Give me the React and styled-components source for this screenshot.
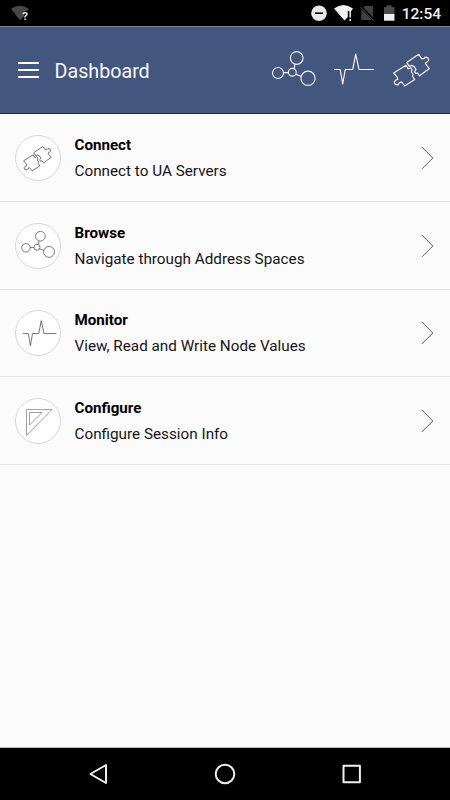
import styled, { createGlobalStyle } from 'styled-components';

const NodesIcon = ({ size, weight, color }) => (
  <Icon width={size} height={size} viewBox="0 0 48 48" $color={color} $weight={weight}>
    <circle cx="27.7" cy="12" r="6.3" />
    <circle cx="9" cy="27" r="5.5" />
    <circle cx="23.3" cy="26.3" r="3.9" />
    <circle cx="39" cy="32.3" r="7.1" />
    <path d="M14.5 26.6H19.4M25 22.8L26 18.2M26.8 28.2L32.2 30.4" />
  </Icon>
);

const PulseIcon = ({ size, weight, color }) => (
  <Icon width={size} height={size} viewBox="0 0 48 48" $color={color} $weight={weight}>
    <path d="M5 23.5H11.2L13.7 38L16.2 23.5H23.7L26.7 8L30 23.5H44.8" />
  </Icon>
);

const PuzzleIcon = ({ size, weight, color }) => (
  <Icon width={size} height={size} viewBox="0 0 48 48" $color={color} $weight={weight}>
    <path d="M4.7 27L17 19.3L19.2 22.9L21.5 21.8L23.2 23.4L22.3 26L24 28.2L23.6 30.2L25.7 33.6L15.7 40L12.6 35.9L10.2 37L9 38.8L6.4 38.4L5.2 36.2L6.4 34.4L8.8 33.2L8.2 31.2Z" />
    <path d="M17.7 16.6L29.7 8.3L32.6 12.6L35 12.6L36.2 11.1L38.6 11.5L39.8 14L38.2 16L36.4 17L37 18.6L40.3 22.4L30.6 29.8L28.6 27.2L26.6 27.4L25.6 25.6L27 23.6L25.2 20.6L22.6 19.4L20.4 20.4Z" />
  </Icon>
);

const RulerIcon = ({ size, weight, color }) => (
  <Icon width={size} height={size} viewBox="0 0 36 36" $color={color} $weight={weight}>
    <path d="M6.5 6.5H32L6.5 32.4Z" />
    <path d="M9.5 9.5H22L9.5 22Z" />
  </Icon>
);

const items = [
  {
    title: 'Connect',
    text: 'Connect to UA Servers',
    icon: <PuzzleIcon size={37} weight={0.9} color="#333" />,
    inset: '1px 0 0 1px',
  },
  {
    title: 'Browse',
    text: 'Navigate through Address Spaces',
    icon: <NodesIcon size={37} weight={0.9} color="#444" />,
    inset: '0 1px 1px 0',
  },
  {
    title: 'Monitor',
    text: 'View, Read and Write Node Values',
    icon: <PulseIcon size={40} weight={0.9} color="#444" />,
    inset: '2px 0 0 2px',
  },
  {
    title: 'Configure',
    text: 'Configure Session Info',
    icon: <RulerIcon size={36} weight={0.7} color="#777" />,
    inset: '0',
  },
];

const StatusIcons = () => (
  <svg width="90" height="26" viewBox="0 0 90 26">
    <circle cx="9" cy="13.2" r="7.8" fill="#e8e8e8" />
    <path d="M5 13.2H13" stroke="#000" strokeWidth="1.6" />
    <path d="M24 8.5Q33.5 1.5 43 8.5L41.2 11H37.8V17L34.5 20.5Z" fill="#f2f2f2" />
    <path d="M40.2 11V17.6M40.2 19V21" stroke="#f2f2f2" strokeWidth="1.5" />
    <path d="M55 6H63V17.2L53.4 7.6ZM51.3 9.3L62 20H51.3Z" fill="#414141" />
    <path d="M50.3 6.8L63.3 20.2" stroke="#484848" strokeWidth="1" />
    <path d="M76.5 5.3H81.5V7H84.5V14H74V7H76.5Z" fill="#484848" />
    <path d="M74 14H84.5V20.7H74Z" fill="#eee" />
  </svg>
);

const App = () => {
  return (
    <>
      <GlobalStyle />
      <Screen>
        <StatusBar>
          <svg width="24" height="26" viewBox="0 0 24 26">
            <path d="M1 8.7Q9.6 2.8 18.5 8.7V10L14 12V16L10 20.2Z" fill="#484848" />
            <Question x="12.3" y="19.5">?</Question>
          </svg>
          <StatusGroup>
            <StatusIcons />
            <Clock>12:54</Clock>
          </StatusGroup>
        </StatusBar>
        <Header>
          <MenuButton aria-label="Menu">
            <MenuLine />
            <MenuLine />
            <MenuLine />
          </MenuButton>
          <Title>Dashboard</Title>
          <Actions>
            <NodesIcon size={48} weight={1.2} color="#e8edf7" />
            <PulseIcon size={48} weight={1.2} color="#f4f7ff" />
            <PuzzleIcon size={48} weight={1.2} color="#f0f4fc" />
          </Actions>
        </Header>
        <List>
          {items.map(({ title, text, icon, inset }) => (
            <Row key={title}>
              <Badge $inset={inset}>{icon}</Badge>
              <Texts>
                <RowTitle>{title}</RowTitle>
                <RowText>{text}</RowText>
              </Texts>
              <Chevron width="13" height="24" viewBox="0 0 13 24">
                <path d="M1 1.2L11.8 12L1 22.8" />
              </Chevron>
            </Row>
          ))}
        </List>
        <NavBar>
          <NavIcon width="20" height="22" viewBox="0 0 20 22">
            <path d="M18 2V20L2.4 11Z" />
          </NavIcon>
          <NavIcon width="22" height="22" viewBox="0 0 22 22">
            <circle cx="11" cy="11" r="9.3" />
          </NavIcon>
          <NavIcon width="20" height="22" viewBox="0 0 20 22">
            <rect x="2.5" y="2.8" width="16.4" height="16.4" />
          </NavIcon>
        </NavBar>
      </Screen>
    </>
  );
};
export default App;

const GlobalStyle = createGlobalStyle`
  * {
    box-sizing: border-box;
  }

  body {
    margin: 0;
    font-family: Roboto, sans-serif;
  }
`;

const Screen = styled.div`
  display: flex;
  flex-direction: column;
  width: 450px;
  height: 800px;
  overflow: hidden;
  background: #fbfbfb;
`;

const StatusBar = styled.div`
  display: flex;
  justify-content: space-between;
  height: 26px;
  padding: 0 9px 0 10px;
  background: #000000;
`;

const StatusGroup = styled.div`
  display: flex;
  gap: 2px;
`;

const Clock = styled.span`
  font-weight: 500;
  font-size: 15.5px;
  line-height: 28px;
  color: #ececec;
`;

const Question = styled.text`
  font-weight: 700;
  font-size: 11.5px;
  fill: #e0e0e0;
`;

const Header = styled.header`
  display: flex;
  align-items: center;
  height: 88px;
  padding: 0 13px 0 18px;
  background: #43567e;
  border-top: 1px solid #777f92;
  border-bottom: 1px solid #0f2c5c;
`;

const MenuButton = styled.button`
  display: flex;
  flex-direction: column;
  gap: 5px;
  width: 21px;
  padding: 0;
  border: none;
  background: none;
`;

const MenuLine = styled.span`
  height: 2px;
  background: #ffffff;
`;

const Title = styled.h1`
  margin: 3px 0 0 15.5px;
  font-weight: 400;
  font-size: 19.7px;
  line-height: 28px;
  color: #f7f9fd;
`;

const Actions = styled.div`
  display: flex;
  gap: 12px;
  margin-left: auto;
`;

const Icon = styled.svg`
  flex: none;
  fill: none;
  stroke: ${({ $color }) => $color};
  stroke-width: ${({ $weight }) => $weight};
  stroke-linejoin: round;
`;

const List = styled.main`
  flex: 1;
  padding-top: 0.75px;
`;

const Row = styled.div`
  display: flex;
  align-items: center;
  height: 87.5px;
  padding: 0 16px 0 15px;
  border-bottom: 1px solid #e2e2e2;
`;

const Badge = styled.div`
  display: flex;
  align-items: center;
  justify-content: center;
  width: 46px;
  height: 46px;
  padding: ${({ $inset }) => $inset};
  border: 1px solid #d8d8d8;
  border-radius: 50%;
  background: #ffffff;
`;

const Texts = styled.div`
  flex: 1;
  margin-left: 13.5px;
`;

const RowTitle = styled.div`
  font-weight: 700;
  font-size: 15.15px;
  line-height: 26px;
  color: #000000;
`;

const RowText = styled.div`
  font-size: 15.28px;
  line-height: 26px;
  color: #151515;
`;

const Chevron = styled.svg`
  fill: none;
  stroke: #555555;
  stroke-width: 1;
`;

const NavBar = styled.nav`
  display: flex;
  align-items: center;
  justify-content: space-between;
  height: 53px;
  padding: 0 89px 0 88px;
  background: #000000;
  border-top: 1px solid #b5b5b5;
`;

const NavIcon = styled.svg`
  fill: none;
  stroke: #f0f0f0;
  stroke-width: 2;
  stroke-linejoin: round;
`;
